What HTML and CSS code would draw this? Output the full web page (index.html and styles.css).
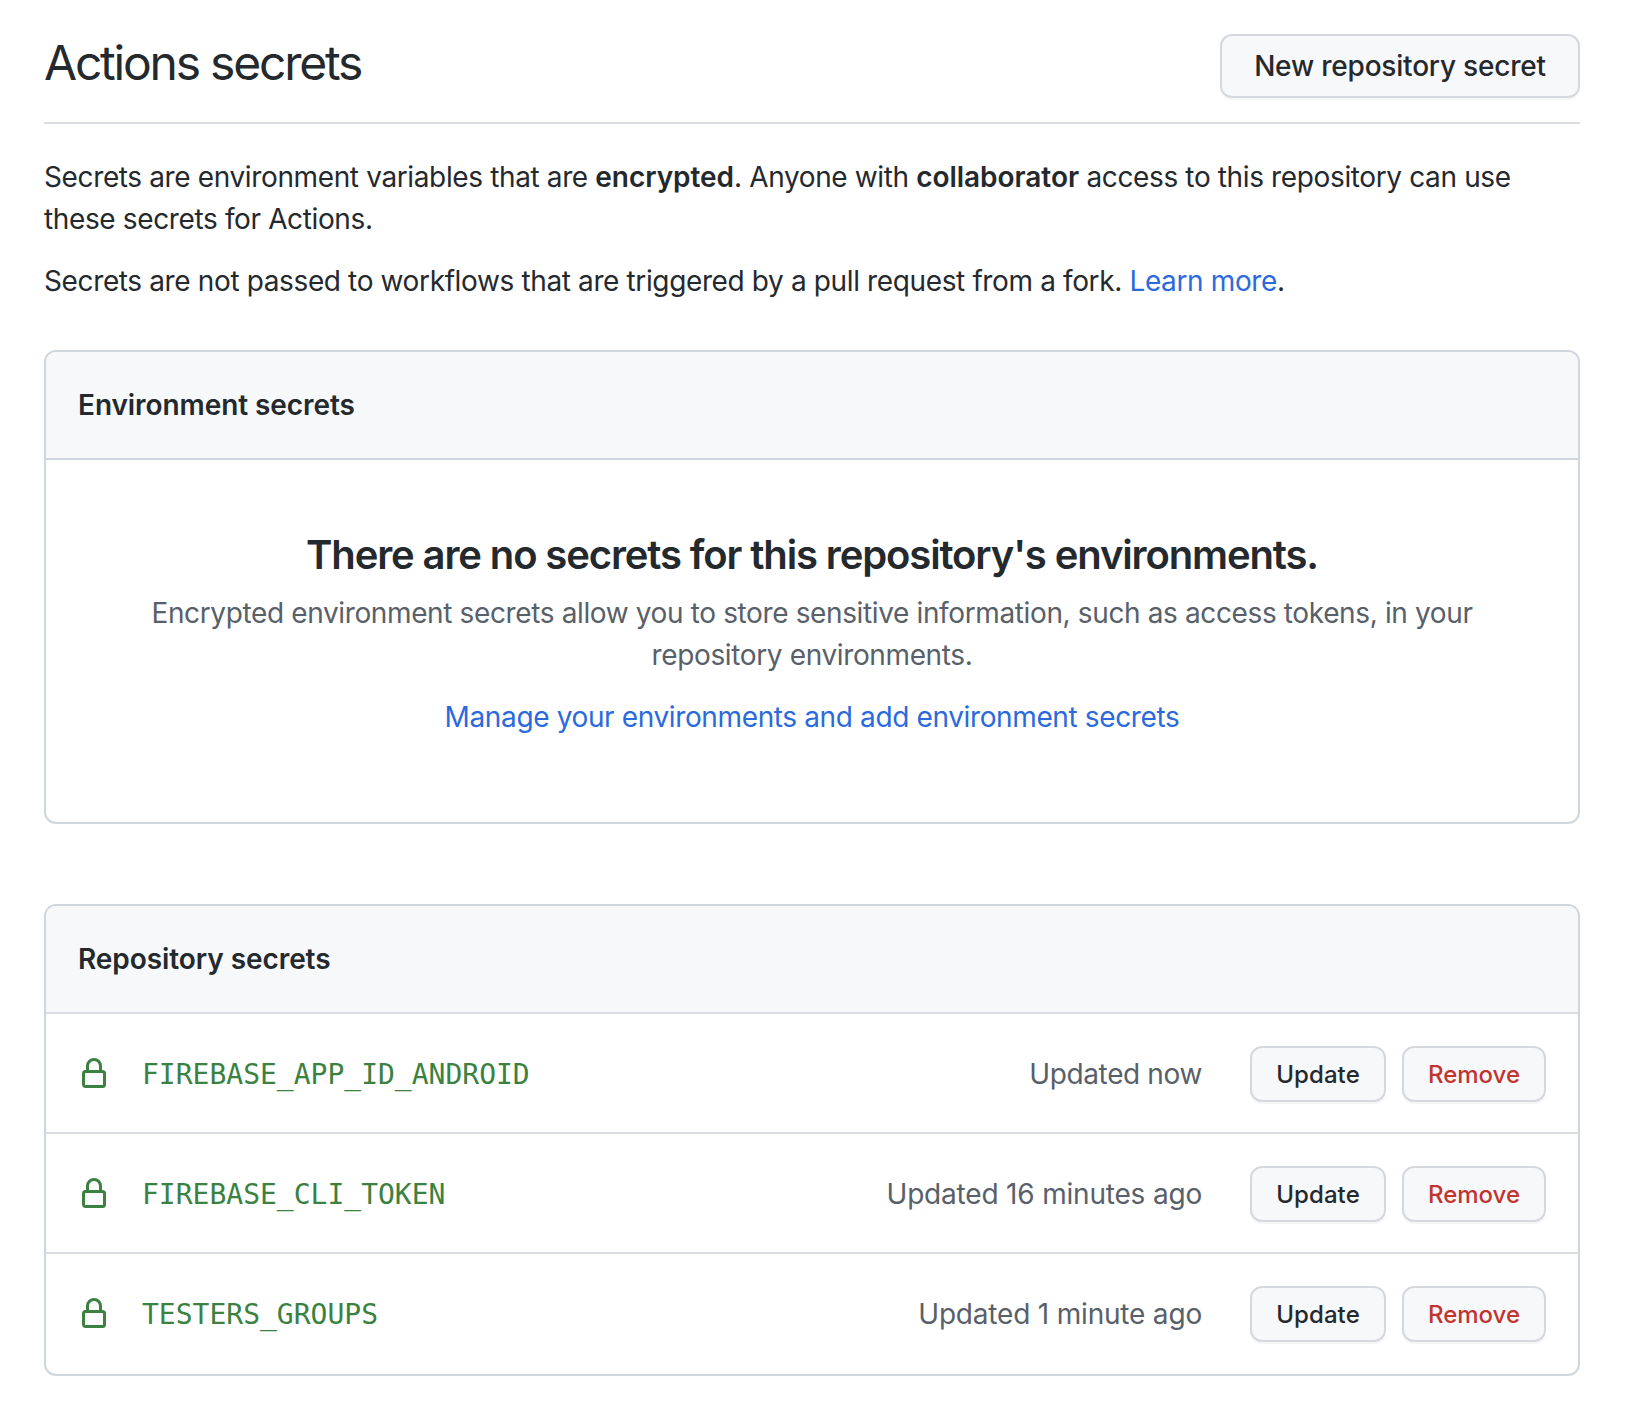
FILE: index.html
```html
<!DOCTYPE html>
<html lang="en">
<head>
<meta charset="utf-8">
<title>Actions secrets</title>
<link rel="stylesheet" href="styles.css">
</head>
<body>
<svg class="sprite" aria-hidden="true"><symbol id="lock" viewBox="0 0 16 16"><path fill-rule="evenodd" d="M4 4v2h-.25A1.75 1.75 0 002 7.75v5.5c0 .966.784 1.75 1.75 1.75h8.5A1.75 1.75 0 0014 13.25v-5.5A1.75 1.75 0 0012.25 6H12V4a4 4 0 10-8 0zm6.5 2V4a2.5 2.5 0 10-5 0v2h5zM3.5 7.75a.25.25 0 01.25-.25h8.5a.25.25 0 01.25.25v5.5a.25.25 0 01-.25.25h-8.5a.25.25 0 01-.25-.25v-5.5z"/></symbol></svg>
<main class="page">
  <header class="subhead">
    <h1 class="title">Actions secrets</h1>
    <button class="btn">New repository secret</button>
  </header>
  <p class="intro">Secrets are environment variables that are <strong>encrypted</strong>. Anyone with <strong>collaborator</strong> access to this repository can use<br>these secrets for Actions.</p>
  <p class="intro">Secrets are not passed to workflows that are triggered by a pull request from a fork. <a class="link" href="#">Learn more</a>.</p>

  <section class="box box-environment">
    <h2 class="box-header">Environment secrets</h2>
    <div class="blankslate">
      <h3 class="blank-title">There are no secrets for this repository's environments.</h3>
      <p class="blank-text">Encrypted environment secrets allow you to store sensitive information, such as access tokens, in your<br>repository environments.</p>
      <p class="blank-text"><a class="link" href="#">Manage your environments and add environment secrets</a></p>
    </div>
  </section>

  <section class="box box-repository">
    <h2 class="box-header">Repository secrets</h2>
    <ul class="rows">
      <li class="row">
        <svg class="lock"><use href="#lock"/></svg>
        <code class="name">FIREBASE_APP_ID_ANDROID</code>
        <span class="updated">Updated now</span>
        <button class="btn btn-sm">Update</button>
        <button class="btn btn-sm btn-danger">Remove</button>
      </li>
      <li class="row">
        <svg class="lock"><use href="#lock"/></svg>
        <code class="name">FIREBASE_CLI_TOKEN</code>
        <span class="updated updated-count">Updated 16 minutes ago</span>
        <button class="btn btn-sm">Update</button>
        <button class="btn btn-sm btn-danger">Remove</button>
      </li>
      <li class="row">
        <svg class="lock"><use href="#lock"/></svg>
        <code class="name">TESTERS_GROUPS</code>
        <span class="updated updated-count">Updated 1 minute ago</span>
        <button class="btn btn-sm">Update</button>
        <button class="btn btn-sm btn-danger">Remove</button>
      </li>
    </ul>
  </section>
</main>
</body>
</html>
```
FILE: styles.css
```css
* { box-sizing: border-box; }
body { margin: 0; background: #fff; color: #24292e; font: 28px/42px Inter, "Liberation Sans", sans-serif; letter-spacing: -.37px; }
h1, h2, h3, p, ul { margin: 0; padding: 0; }
.sprite { display: none; }
.page { padding: 26px 48px 0 44px; }
.subhead { display: flex; align-items: flex-end; justify-content: space-between; height: 98px; padding-bottom: 24px; margin-bottom: 32px; border-bottom: 2px solid #d9dde2; }
.title { height: 72px; font-size: 48px; line-height: 74px; font-weight: 400; letter-spacing: -2.22px; }
.btn { display: flex; align-items: center; justify-content: center; width: 360px; height: 64px; padding: 0; border: 2px solid #d5d8dc; border-radius: 12px; background: #f7f8fa; color: #24292e; font: 500 28px/40px Inter, "Liberation Sans", sans-serif; letter-spacing: -.2px; white-space: nowrap; box-shadow: 0 2px 0 rgba(27, 31, 35, .04); }
.intro { margin-bottom: 20px; white-space: nowrap; }
.intro strong { font-weight: 600; letter-spacing: -.05px; }
.link { color: #2b6add; text-decoration: none; }
.box { border: 2px solid #d0d6dd; border-radius: 12px; overflow: hidden; background: #fff; }
.box-environment { margin-top: 48px; }
.box-repository { margin-top: 80px; }
.box-header { padding: 32px; background: #f7f8fa; font-size: 28px; line-height: 42px; font-weight: 600; letter-spacing: -.07px; }
.blankslate { height: 364px; padding: 64px 0; border-top: 2px solid #d0d6dd; text-align: center; white-space: nowrap; }
.blank-title { height: 60px; margin-bottom: 8px; font-size: 40px; line-height: 62px; font-weight: 600; letter-spacing: -1.12px; }
.blank-text { margin-bottom: 20px; color: #586069; }
.rows { list-style: none; }
.row { display: flex; align-items: center; height: 120px; padding: 32px 32px 30px; border-top: 2px solid #d9dde2; }
.row:last-child { height: 122px; padding-bottom: 32px; }
.lock { width: 32px; height: 32px; margin-right: 32px; fill: #3b813f; }
.name { flex: 1; height: 42px; color: #3b813f; font: 28px/44px "DejaVu Sans Mono", monospace; letter-spacing: 0; }
.updated { margin-right: 48px; color: #586069; }
.updated-count { letter-spacing: -.19px; }
.btn-sm { width: 136px; height: 56px; padding-top: 2px; font-size: 24px; letter-spacing: .1px; }
.btn-danger { width: 144px; margin-left: 16px; color: #c13430; letter-spacing: 0; }
```
